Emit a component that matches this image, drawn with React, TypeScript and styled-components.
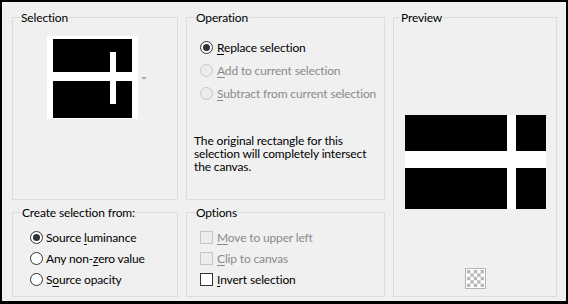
import React from "react";
import styled, { createGlobalStyle, css } from "styled-components";

const FONT = `Lato, "Noto Sans", "Liberation Sans", sans-serif`;

const Global = createGlobalStyle`
  html, body { margin: 0; padding: 0; background: #000; }
  body { font-family: ${FONT}; }
`;

const Window = styled.div`
  box-sizing: border-box;
  width: 568px;
  height: 304px;
  border-style: solid;
  border-color: #000;
  border-width: 2px 2px 3px 2px;
  background: #f0f0f0;
  padding: 15px 9px 4px 10px;
  display: grid;
  grid-template-columns: 166px 199px 164px;
  grid-template-rows: 183px 85px;
  column-gap: 8px;
  row-gap: 12px;
  font-family: ${FONT};
  font-size: 12px;
  letter-spacing: -0.15px;
  color: #000;
`;

const Group = styled.div<{ $span?: boolean }>`
  box-sizing: border-box;
  border: 1px solid #dcdcdc;
  display: flex;
  flex-direction: column;
  min-width: 0;
  ${(p) =>
    p.$span &&
    css`
      grid-row: 1 / span 2;
      grid-column: 3;
    `}
`;

const Title = styled.div<{ $left: number }>`
  align-self: flex-start;
  height: 15px;
  line-height: 15px;
  margin: -8px 0 0 ${(p) => p.$left}px;
  padding: 0 1px;
  background: #f0f0f0;
  white-space: nowrap;
`;

const Picker = styled.div`
  display: flex;
  align-items: center;
  gap: 3px;
  margin: 11px 0 0 34px;
`;

const DropArrow = styled.div`
  width: 0;
  height: 0;
  border-left: 3px solid transparent;
  border-right: 3px solid transparent;
  border-top: 3px solid #b0b0b0;
  margin-top: 2px;
`;

const List = styled.div<{ $top: number; $left: number }>`
  display: flex;
  flex-direction: column;
  margin: ${(p) => p.$top}px 0 0 ${(p) => p.$left}px;
`;

const Row = styled.label<{ $h: number; $gap: number; $disabled?: boolean }>`
  display: flex;
  align-items: center;
  gap: ${(p) => p.$gap}px;
  height: ${(p) => p.$h}px;
  white-space: nowrap;
  color: ${(p) => (p.$disabled ? "#8a8a8a" : "#000")};
`;

const Radio = styled.span<{ $checked?: boolean; $disabled?: boolean }>`
  box-sizing: border-box;
  width: 13px;
  height: 13px;
  border-radius: 50%;
  border: 1px solid ${(p) => (p.$disabled ? "#c6c6c6" : "#333")};
  background: ${(p) => (p.$disabled ? "#ececec" : "#fff")};
  display: flex;
  align-items: center;
  justify-content: center;
  flex: none;
  &::after {
    content: "";
    width: 7px;
    height: 7px;
    border-radius: 50%;
    background: #333;
    display: ${(p) => (p.$checked ? "block" : "none")};
  }
`;

const Check = styled.span<{ $disabled?: boolean }>`
  box-sizing: border-box;
  width: 13px;
  height: 13px;
  border: 1px solid ${(p) => (p.$disabled ? "#c6c6c6" : "#333")};
  background: ${(p) => (p.$disabled ? "#ececec" : "#fff")};
  flex: none;
`;

const Key = styled.u`
  text-decoration: underline;
  text-underline-offset: 2px;
`;

const Note = styled.p`
  margin: 29px 0 0 7px;
  line-height: 13px;
`;

const PreviewArea = styled.div`
  display: flex;
  flex-direction: column;
  align-items: center;
  margin-top: 90px;
  flex: 1;
`;

const PreviewPic = styled.svg`
  display: block;
  margin-left: 1px;
`;

const Checker = styled.svg`
  display: block;
  margin-top: 59px;
  margin-left: 1px;
`;

function Thumb() {
  return (
    <svg width="91" height="83" viewBox="0 0 91 83">
      <rect x="0" y="0" width="91" height="83" fill="#fff" />
      <rect x="6" y="3" width="79" height="79" fill="#000" />
      <rect x="6" y="36" width="79" height="9" fill="#fff" />
      <rect x="63" y="16" width="6" height="52" fill="#fff" />
    </svg>
  );
}

function CheckerIcon() {
  const cells: React.ReactElement[] = [];
  for (let r = 0; r < 5; r++)
    for (let c = 0; c < 5; c++)
      if ((r + c) % 2 === 0)
        cells.push(
          <rect key={`${r}-${c}`} x={2 + c * 3.4} y={2 + r * 3.4} width="3.4" height="3.4" fill="#b8b8b8" />
        );
  return (
    <Checker width="21" height="21" viewBox="0 0 21 21">
      <rect x="0.5" y="0.5" width="20" height="20" fill="#fff" stroke="#b4b4b4" />
      {cells}
    </Checker>
  );
}

export default function App() {
  return (
    <>
      <Global />
      <Window>
        <Group>
          <Title $left={7}>Selection</Title>
          <Picker>
            <Thumb />
            <DropArrow />
          </Picker>
        </Group>

        <Group>
          <Title $left={8}>Operation</Title>
          <List $top={11} $left={13}>
            <Row $h={23} $gap={4}>
              <Radio $checked />
              <span>
                <Key>R</Key>eplace selection
              </span>
            </Row>
            <Row $h={23} $gap={4} $disabled>
              <Radio $disabled />
              <span>
                <Key>A</Key>dd to current selection
              </span>
            </Row>
            <Row $h={23} $gap={4} $disabled>
              <Radio $disabled />
              <span>
                <Key>S</Key>ubtract from current selection
              </span>
            </Row>
          </List>
          <Note>
            The original rectangle for this
            <br />
            selection will completely intersect
            <br />
            the canvas.
          </Note>
        </Group>

        <Group $span>
          <Title $left={6}>Preview</Title>
          <PreviewArea>
            <PreviewPic width="141" height="94" viewBox="0 0 141 94">
              <rect x="0" y="0" width="141" height="94" fill="#000" />
              <rect x="0" y="36" width="141" height="17" fill="#fff" />
              <rect x="102" y="0" width="9" height="94" fill="#fff" />
            </PreviewPic>
            <CheckerIcon />
          </PreviewArea>
        </Group>

        <Group>
          <Title $left={8}>Create selection from:</Title>
          <List $top={7} $left={17}>
            <Row $h={21} $gap={3}>
              <Radio $checked />
              <span>
                Source <Key>l</Key>uminance
              </span>
            </Row>
            <Row $h={21} $gap={3}>
              <Radio />
              <span>
                Any non-<Key>z</Key>ero value
              </span>
            </Row>
            <Row $h={21} $gap={3}>
              <Radio />
              <span>
                S<Key>o</Key>urce opacity
              </span>
            </Row>
          </List>
        </Group>

        <Group>
          <Title $left={8}>Options</Title>
          <List $top={7} $left={13}>
            <Row $h={21} $gap={4} $disabled>
              <Check $disabled />
              <span>
                <Key>M</Key>ove to upper left
              </span>
            </Row>
            <Row $h={21} $gap={4} $disabled>
              <Check $disabled />
              <span>
                <Key>C</Key>lip to canvas
              </span>
            </Row>
            <Row $h={21} $gap={4}>
              <Check />
              <span>
                <Key>I</Key>nvert selection
              </span>
            </Row>
          </List>
        </Group>
      </Window>
    </>
  );
}
